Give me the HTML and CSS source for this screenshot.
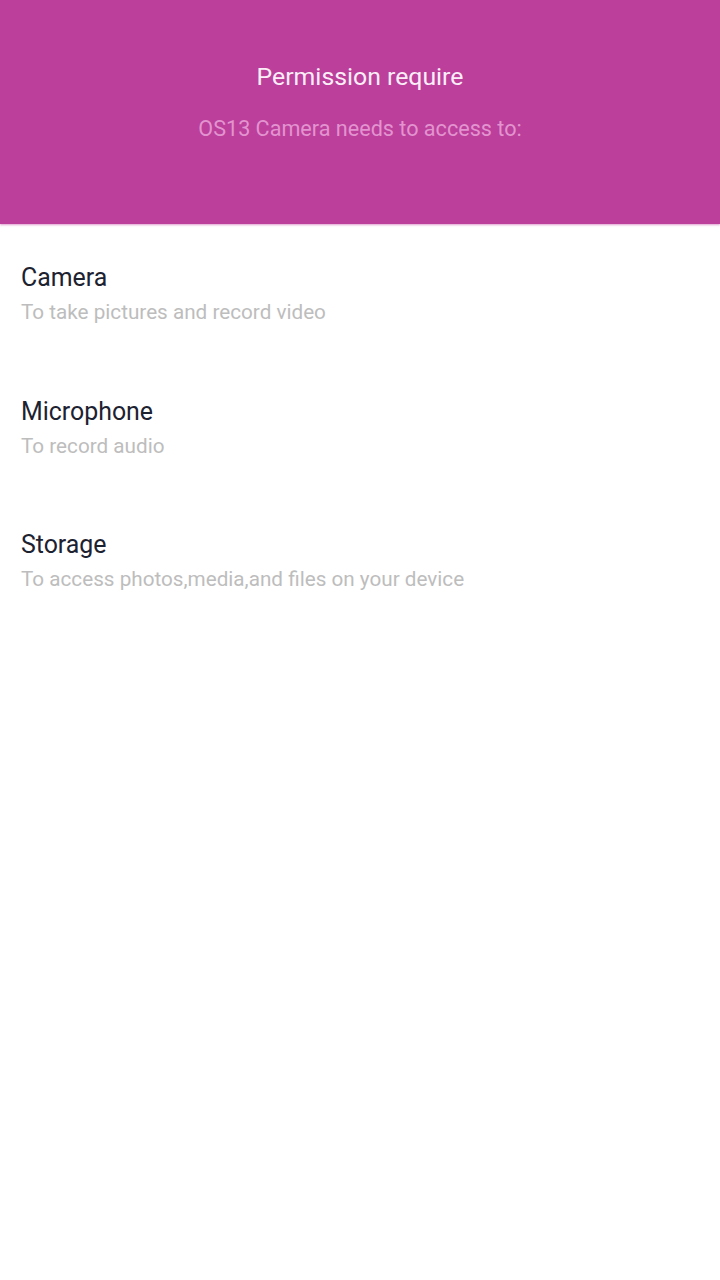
FILE: index.html
```html
<!DOCTYPE html>
<html>
<head>
<meta charset="utf-8">
<link rel="stylesheet" href="styles.css">
</head>
<body>
<header class="header">
  <div class="header-title">Permission require</div>
  <div class="header-sub">OS13 Camera needs to access to:</div>
</header>
<main class="list">
  <div class="item">
    <div class="item-title">Camera</div>
    <div class="item-sub">To take pictures and record video</div>
  </div>
  <div class="item">
    <div class="item-title">Microphone</div>
    <div class="item-sub">To record audio</div>
  </div>
  <div class="item">
    <div class="item-title">Storage</div>
    <div class="item-sub">To access photos,media,and files on your device</div>
  </div>
</main>
</body>
</html>
```
FILE: styles.css
```css
html, body {
  margin: 0;
  padding: 0;
  background: #ffffff;
  font-family: Roboto, "Noto Sans", sans-serif;
}
.header {
  height: 224px;
  box-sizing: border-box;
  background: #bb3f9b;
  display: flex;
  flex-direction: column;
  align-items: center;
  padding-top: 61px;
  gap: 23px;
  box-shadow: 0 1px 2px rgba(187, 63, 155, 0.5);
}
.header-title {
  color: #fbeef7;
  font-size: 24.8px;
  line-height: 32px;
}
.header-sub {
  color: #e393cf;
  font-size: 21.6px;
  line-height: 26px;
}
.list {
  display: flex;
  flex-direction: column;
  padding-top: 40px;
  gap: 72.5px;
}
.item {
  padding-left: 21px;
  display: flex;
  flex-direction: column;
  gap: 7px;
}
.item-title {
  color: #1d2230;
  font-size: 24.9px;
  line-height: 28px;
}
.item-sub {
  color: #bdbdbd;
  font-size: 20.7px;
  line-height: 26px;
}
```
